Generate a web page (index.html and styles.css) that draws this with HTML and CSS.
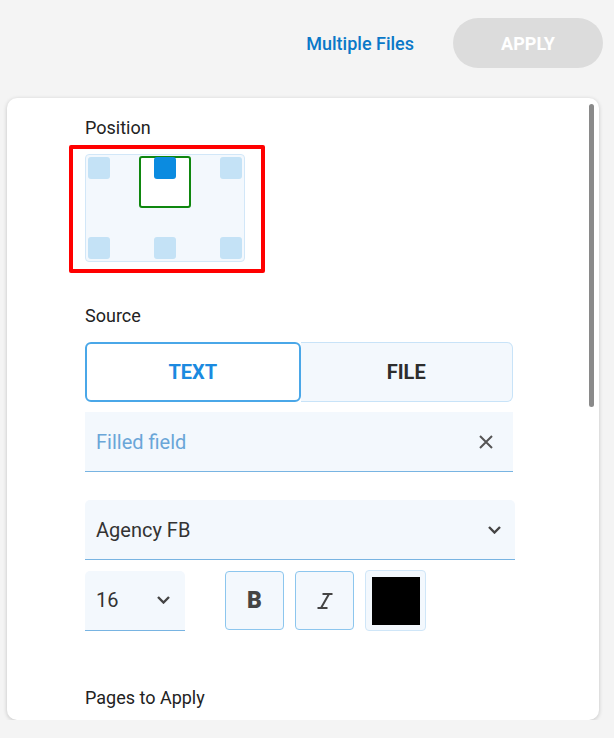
FILE: index.html
```html
<!DOCTYPE html>
<html lang="en">
<head>
    <meta charset="UTF-8">
    <meta name="viewport" content="width=device-width, initial-scale=1.0">
    <title>Stamp Settings</title>
    <link rel="stylesheet" href="styles.css">
</head>
<body>
    <div class="header">
        <a class="link" href="#">Multiple Files</a>
        <button class="apply" disabled>APPLY</button>
    </div>

    <div class="card">
        <div class="scroll-thumb"></div>

        <div class="label">Position</div>
        <div class="pos-grid">
            <div class="pos-frame"></div>
            <div class="cell"></div>
            <div class="cell active"></div>
            <div class="cell"></div>
            <div class="cell"></div>
            <div class="cell"></div>
            <div class="cell"></div>
            <div class="highlight"></div>
        </div>

        <div class="label source-label">Source</div>
        <div class="toggle">
            <button class="toggle-btn selected">TEXT</button>
            <button class="toggle-btn">FILE</button>
        </div>
        <div class="field">
            <span class="field-value">Filled field</span>
            <svg class="clear" width="14" height="14" viewBox="0 0 14 14">
                <path d="M1 1L13 13M13 1L1 13" stroke="#555" stroke-width="2" fill="none"/>
            </svg>
        </div>

        <div class="select font-select">
            <span>Agency FB</span>
            <svg width="13" height="8" viewBox="0 0 13 8">
                <polyline points="1,1 6.5,6.5 12,1" stroke="#444" stroke-width="2.4" fill="none"/>
            </svg>
        </div>

        <div class="style-row">
            <div class="select size-select">
                <span>16</span>
                <svg width="13" height="8" viewBox="0 0 13 8">
                    <polyline points="1,1 6.5,6.5 12,1" stroke="#444" stroke-width="2.4" fill="none"/>
                </svg>
            </div>
            <div class="tools">
                <button class="tool bold">B</button>
                <button class="tool">
                    <svg width="16" height="16" viewBox="0 0 16 16">
                        <path d="M5.5 1H15.5M12 1L4 15M0.5 15H10.5" stroke="#444" stroke-width="2" fill="none"/>
                    </svg>
                </button>
                <div class="color-box"><div class="swatch"></div></div>
            </div>
        </div>

        <div class="label pages-label">Pages to Apply</div>
    </div>
</body>
</html>
```

FILE: styles.css
```css
body {
    margin: 0;
    background-color: #f4f4f4;
    font-family: Roboto, "Liberation Sans", sans-serif;
    color: #2d2d2d;
}
.header {
    display: flex;
    justify-content: flex-end;
    align-items: center;
    padding: 18px 11px 0 0;
    gap: 39px;
}
.link {
    color: #0a78c8;
    font-size: 18px;
    font-weight: 500;
    text-decoration: none;
}
.apply {
    width: 150px;
    height: 50px;
    border: none;
    border-radius: 25px;
    background-color: #dcdcdc;
    color: #fff;
    font-family: inherit;
    font-size: 18px;
    font-weight: 700;
}
.card {
    position: relative;
    box-sizing: border-box;
    width: 592px;
    height: 622px;
    margin: 30px 0 0 7px;
    padding: 20px 0 0 78px;
    background-color: #fff;
    border-radius: 10px;
    box-shadow: 0 1px 4px rgba(0, 0, 0, 0.2);
    overflow: hidden;
}
.scroll-thumb {
    position: absolute;
    left: 582px;
    top: 6px;
    width: 5px;
    height: 303px;
    border-radius: 3px;
    background-color: #8a8a8a;
}
.label {
    font-size: 18px;
    line-height: 20px;
    font-weight: 400;
    color: #222;
    margin-bottom: 16px;
}
.source-label {
    margin-top: 44px;
}
.pages-label {
    margin-top: 57px;
}
.pos-grid {
    position: relative;
    box-sizing: border-box;
    width: 160px;
    height: 108px;
    padding: 2px;
    border: 1px solid #d2e7f8;
    border-radius: 4px;
    background-color: #f3f8fd;
    display: grid;
    grid-template-columns: repeat(3, 22px);
    grid-template-rows: repeat(2, 22px);
    justify-content: space-between;
    align-content: space-between;
}
.cell {
    position: relative;
    z-index: 1;
    border-radius: 3px;
    background-color: #c4e2f6;
}
.cell.active {
    background-color: #0b8be0;
}
.pos-frame {
    position: absolute;
    left: 53px;
    top: 1px;
    width: 52px;
    height: 52px;
    box-sizing: border-box;
    border: 2px solid #0f870f;
    border-radius: 3px;
    background-color: #fff;
}
.highlight {
    position: absolute;
    left: -17px;
    top: -10px;
    width: 196px;
    height: 128px;
    box-sizing: border-box;
    border: 4px solid #ff0000;
    border-radius: 2px;
}
.toggle {
    display: flex;
    width: 428px;
    height: 60px;
}
.toggle-btn {
    flex: 1;
    font-family: inherit;
    font-size: 20px;
    font-weight: 700;
    color: #2d2d2d;
    background-color: #f3f8fd;
    border: 1px solid #c8e3f8;
    border-left: none;
    border-radius: 0 6px 6px 0;
}
.toggle-btn.selected {
    color: #1b8ae0;
    background-color: #fff;
    border: 2px solid #4aa7e8;
    border-radius: 6px;
}
.field {
    display: flex;
    align-items: center;
    justify-content: space-between;
    box-sizing: border-box;
    width: 428px;
    height: 60px;
    margin-top: 10px;
    padding: 0 20px 0 11px;
    background-color: #f3f8fd;
    border-bottom: 1px solid #78b4e2;
}
.field-value {
    font-size: 20px;
    color: #6aa6d8;
}
.select {
    display: flex;
    align-items: center;
    justify-content: space-between;
    box-sizing: border-box;
    height: 60px;
    padding: 0 14px 0 11px;
    background-color: #f3f8fd;
    border-bottom: 1px solid #78b4e2;
    border-radius: 5px 5px 0 0;
    font-size: 20px;
    color: #333;
}
.font-select {
    width: 430px;
    margin-top: 28px;
}
.style-row {
    display: flex;
    align-items: center;
    margin-top: 10px;
}
.size-select {
    width: 100px;
    padding-right: 15px;
}
.tools {
    display: flex;
    align-items: center;
    gap: 11px;
    margin-left: 40px;
}
.tool {
    display: flex;
    align-items: center;
    justify-content: center;
    width: 59px;
    height: 59px;
    padding: 0;
    background-color: #f3f8fd;
    border: 1px solid #8cc6ee;
    border-radius: 4px;
}
.tool.bold {
    font-family: inherit;
    font-size: 23px;
    font-weight: 900;
    color: #454545;
}
.color-box {
    box-sizing: border-box;
    width: 61px;
    height: 61px;
    padding: 6px;
    border: 1px solid #cfe6f8;
    border-radius: 4px;
    background-color: #f3f8fd;
}
.swatch {
    width: 48px;
    height: 48px;
    background-color: #000;
}
```
